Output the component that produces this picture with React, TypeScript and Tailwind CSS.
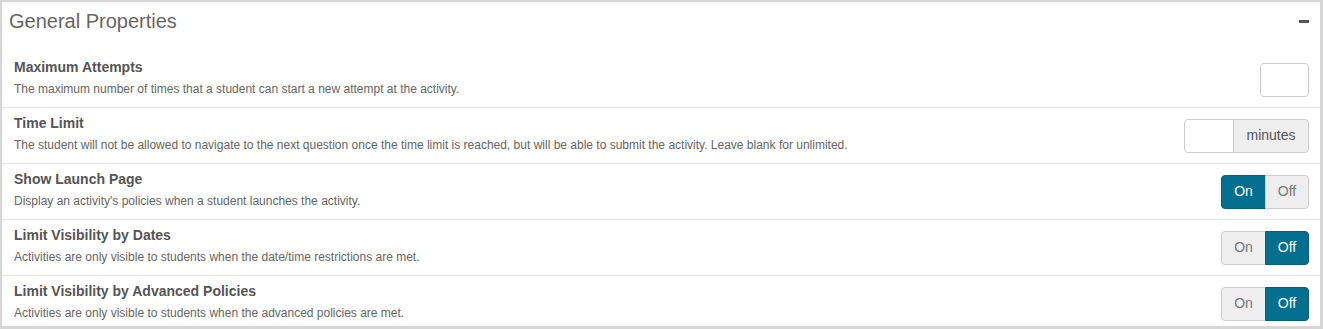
import React from "react";

type Row = {
  title: string;
  desc: string;
  control: React.ReactNode;
};

const Toggle = ({ on }: { on: boolean }) => (
  <div className="flex h-[34px] text-[14px]">
    <div
      className={
        on
          ? "flex w-[45px] items-center justify-center rounded-l-[4px] border border-[#0a5f78] bg-[#036f8e] text-white"
          : "flex w-[45px] items-center justify-center rounded-l-[4px] border border-[#cccccc] bg-[#eeeeee] text-[#777777]"
      }
    >
      On
    </div>
    <div
      className={
        !on
          ? "-ml-px flex w-[44px] items-center justify-center rounded-r-[4px] border border-[#0a5f78] bg-[#036f8e] text-white"
          : "-ml-px flex w-[44px] items-center justify-center rounded-r-[4px] border border-[#cccccc] bg-[#eeeeee] text-[#777777]"
      }
    >
      Off
    </div>
  </div>
);

export default function App() {
  const rows: Row[] = [
    {
      title: "Maximum Attempts",
      desc: "The maximum number of times that a student can start a new attempt at the activity.",
      control: (
        <div className="mt-[2px] h-[34px] w-[49px] rounded-[4px] border border-[#cccccc] bg-white" />
      ),
    },
    {
      title: "Time Limit",
      desc: "The student will not be allowed to navigate to the next question once the time limit is reached, but will be able to submit the activity. Leave blank for unlimited.",
      control: (
        <div className="flex h-[34px] text-[14px]">
          <div className="w-[50px] rounded-l-[4px] border border-[#cccccc] bg-white" />
          <div className="-ml-px flex w-[76px] items-center justify-center rounded-r-[4px] border border-[#cccccc] bg-[#eeeeee] text-[#555555]">
            minutes
          </div>
        </div>
      ),
    },
    {
      title: "Show Launch Page",
      desc: "Display an activity's policies when a student launches the activity.",
      control: <Toggle on={true} />,
    },
    {
      title: "Limit Visibility by Dates",
      desc: "Activities are only visible to students when the date/time restrictions are met.",
      control: <Toggle on={false} />,
    },
    {
      title: "Limit Visibility by Advanced Policies",
      desc: "Activities are only visible to students when the advanced policies are met.",
      control: <Toggle on={false} />,
    },
  ];

  return (
    <div
      className="h-[329px] w-[1323px] bg-white"
      style={{ fontFamily: '"Liberation Sans", Arial, sans-serif' }}
    >
      <div className="h-full border-t-2 border-l-2 border-r-[3px] border-b-[3px] border-[#d6d6d6]">
        <div className="flex h-[38px] items-center justify-between pl-[7px] pr-[11px]">
          <div className="text-[20px] leading-[24px] text-[#666666]">General Properties</div>
          <div className="h-[3px] w-[10px] bg-[#555555]" />
        </div>
        <div className="pt-[11px]">
          {rows.map((r, i) => (
            <div
              key={r.title}
              className={
                i === 0
                  ? "flex h-[56px] items-center justify-between pl-[12px] pr-[11px]"
                  : "flex h-[56px] items-center justify-between border-t border-[#e6e6e6] pl-[12px] pr-[11px]"
              }
            >
              <div className="flex flex-col pb-[4px]">
                <div className="text-[14px] font-bold leading-[20px] text-[#555555]">{r.title}</div>
                <div className="mt-[4px] text-[12px] leading-[17px] text-[#666666]">{r.desc}</div>
              </div>
              {r.control}
            </div>
          ))}
        </div>
      </div>
    </div>
  );
}
